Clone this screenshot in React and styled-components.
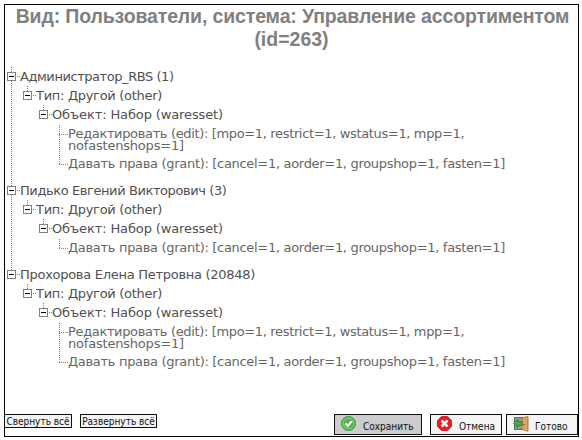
import React from "react";
import styled, { createGlobalStyle } from "styled-components";

const GlobalStyle = createGlobalStyle`
  body { margin: 0; background: #fff; }
  * { box-sizing: border-box; }
`;

const Frame = styled.main`
  width: 575px;
  height: 433px;
  margin: 4px 0 0 4px;
  border: 1px solid #000;
  display: flex;
  flex-direction: column;
  font-family: "DejaVu Sans", Verdana, sans-serif;
`;

const Title = styled.h1`
  margin: 0;
  height: 62px;
  font: bold 19.5px/23px "Liberation Sans", Arial, sans-serif;
  color: #808080;
  text-align: center;
  white-space: nowrap;
`;

const TitleLine = styled.span`
  display: block;
  letter-spacing: ${(p) => p.$spacing || 0}px;
  padding-left: ${(p) => p.$shift || 0}px;
`;

const Tree = styled.ul`
  list-style: none;
  margin: 0;
  padding: 0 0 0 2px;
  flex: 1;
`;

const dots = "repeating-linear-gradient(to bottom, #808080 0 1px, transparent 1px 2px)";

const User = styled.li`
  padding-bottom: 8px;
  background: ${(p) => (p.$last ? "none" : dots)} 4px 0 / 1px 100% no-repeat;
`;

const Row = styled.div`
  display: flex;
  height: 19px;
  padding-left: ${(p) => p.$level * 16}px;
  font-size: 13px;
  line-height: 19px;
  letter-spacing: ${(p) => p.$spacing}px;
  color: #505050;
  white-space: nowrap;
`;

const Toggle = styled.svg`
  flex: none;
  width: 13px;
  height: 19px;
`;

const Rights = styled.ul`
  list-style: none;
  margin: 0;
  padding: 0 0 0 52px;
`;

const Right = styled.li`
  min-height: ${(p) => (p.$last ? 19 : 30)}px;
  padding: 4px 0 2px 9px;
  font-size: 13px;
  line-height: 12px;
  color: #666;
  background:
    ${dots} 0 1px / 1px ${(p) => (p.$last ? "10px" : "100%")} no-repeat,
    repeating-linear-gradient(to right, #808080 0 1px, transparent 1px 2px) 0 10px / 9px 1px no-repeat;
`;

const RightLine = styled.span`
  display: block;
  letter-spacing: ${(p) => p.$spacing}px;
  white-space: nowrap;
`;

const Footer = styled.footer`
  display: flex;
  align-items: flex-start;
  height: 22px;
  margin-left: -1px;
`;

const LinkButton = styled.button`
  width: ${(p) => p.$width}px;
  height: 14px;
  margin: 0 8px 0 0;
  padding: 1px 0 0;
  border: 1px solid #111;
  background: #f4f4f4;
  color: #111;
  font: 10px/12px "DejaVu Sans Condensed", "DejaVu Sans", sans-serif;
  white-space: nowrap;
`;

const Actions = styled.div`
  display: flex;
  gap: 4px;
  margin-left: auto;
`;

const ActionButton = styled.button`
  display: flex;
  width: ${(p) => p.$width}px;
  height: 21px;
  margin-left: ${(p) => p.$offset || 0}px;
  padding: 0 0 0 6px;
  border: 1px solid #111;
  background: ${(p) => (p.$active ? "#ccc" : "#f4f4f4")};
  color: #111;
  font: 10px/24px "DejaVu Sans Condensed", "DejaVu Sans", sans-serif;
  white-space: nowrap;
`;

const Icon = styled.svg`
  flex: none;
  width: 16px;
  height: 16px;
  margin: 1px 6px 0 0;
`;

const NodeToggle = () => (
  <Toggle viewBox="0 0 13 19" shapeRendering="crispEdges">
    <path d="M4 0h1v1h-1zM4 2h1v1h-1zM4 4h1v1h-1zM10 9h1v1h-1zM12 9h1v1h-1z" fill="#808080" />
    <rect x=".5" y="5.5" width="8" height="8" fill="#fff" stroke="#808080" />
    <path d="M2 9h5v1h-5z" fill="#000" />
  </Toggle>
);

const SaveIcon = () => (
  <Icon viewBox="0 0 16 16">
    <circle cx="7.500" cy="7.500" r="7" fill="#52b352" stroke="#379b3b" />
    <circle cx="7.500" cy="7.500" r="5.500" fill="none" stroke="#a6dca0" strokeWidth=".8" />
    <path d="M4.500 7.500l2.300 2.500 4-4.800" fill="none" stroke="#fff" strokeWidth="2" />
  </Icon>
);

const CancelIcon = () => (
  <Icon viewBox="0 0 16 16">
    <path d="M4.500.500h6l4 4v6l-4 4h-6l-4-4v-6z" fill="#ed1c24" stroke="#e0202a" strokeLinejoin="round" />
    <path d="M4.500 4.500l6 6M10.500 4.500l-6 6" stroke="#fff" strokeWidth="2.500" />
  </Icon>
);

const DoorIcon = () => (
  <Icon viewBox="0 0 16 16">
    <path d="M1 1h9v13H1z" fill="#666" />
    <path d="M2 2h7v11H2z" fill="#999" />
    <path d="M9 1.500L14.500 0l1 .8v14.200l-1 .8L9 14z" fill="#b98042" />
    <path d="M10 2.200L14.200 1v13.800L10 13.500z" fill="#d9a868" />
    <circle cx="11" cy="8.500" r=".8" fill="#7d4e1c" />
    <path d="M.500 7.500l4.500-4.200v2.400h4v3.600H5v2.400z" fill="#48b048" stroke="#267b2b" strokeWidth=".8" />
  </Icon>
);

const EDIT = [
  { text: "Редактировать (edit): [mpo=1, restrict=1, wstatus=1, mpp=1,", spacing: -0.35 },
  { text: "nofastenshops=1]", spacing: -0.2 },
];
const GRANT = [
  { text: "Давать права (grant): [cancel=1, aorder=1, groupshop=1, fasten=1]", spacing: -0.31 },
];

const users = [
  { name: "Администратор_RBS (1)", spacing: -0.44, rights: [EDIT, GRANT] },
  { name: "Пидько Евгений Викторович (3)", spacing: -0.41, rights: [GRANT] },
  { name: "Прохорова Елена Петровна (20848)", spacing: -0.28, rights: [EDIT, GRANT] },
];

const TreeRow = ({ level, spacing, children }) => (
  <Row $level={level} $spacing={spacing}>
    <NodeToggle />
    <span>{children}</span>
  </Row>
);

export default function App() {
  return (
    <>
      <GlobalStyle />
      <Frame>
        <Title>
          <TitleLine $spacing={-0.14} $shift={2}>
            Вид: Пользователи, система: Управление ассортиментом
          </TitleLine>
          <TitleLine>(id=263)</TitleLine>
        </Title>
        <Tree>
          {users.map((user, i) => (
            <User key={user.name} $last={i === users.length - 1}>
              <TreeRow level={0} spacing={user.spacing}>{user.name}</TreeRow>
              <TreeRow level={1} spacing={-0.3}>Тип: Другой (other)</TreeRow>
              <TreeRow level={2} spacing={-0.12}>Объект: Набор (waresset)</TreeRow>
              <Rights>
                {user.rights.map((right, j) => (
                  <Right key={right[0].text} $last={j === user.rights.length - 1}>
                    {right.map((line) => (
                      <RightLine key={line.text} $spacing={line.spacing}>{line.text}</RightLine>
                    ))}
                  </Right>
                ))}
              </Rights>
            </User>
          ))}
        </Tree>
        <Footer>
          <LinkButton $width={68}>Свернуть всё</LinkButton>
          <LinkButton $width={77}>Развернуть всё</LinkButton>
          <Actions>
            <ActionButton $width={88} $active>
              <SaveIcon />
              Сохранить
            </ActionButton>
            <ActionButton $width={72} $offset={4}>
              <CancelIcon />
              Отмена
            </ActionButton>
            <ActionButton $width={72}>
              <DoorIcon />
              Готово
            </ActionButton>
          </Actions>
        </Footer>
      </Frame>
    </>
  );
}
